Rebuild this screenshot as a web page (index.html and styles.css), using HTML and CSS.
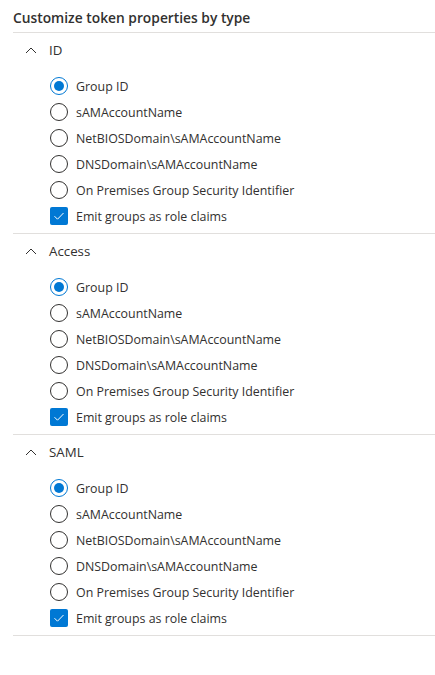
FILE: index.html
```html
<!DOCTYPE html>
<html>
<head>
<meta charset="utf-8">
<link rel="stylesheet" href="styles.css">
</head>
<body>
<div class="panel">
  <div class="title">Customize token properties by type</div>

  <div class="section">
    <div class="section-header">
      <svg class="chev" width="12" height="8" viewBox="0 0 12 8"><path d="M1 7 L6 2 L11 7" fill="none" stroke="#323130" stroke-width="1"/></svg>
      <span>ID</span>
    </div>
    <div class="list">
      <div class="row"><span class="radio checked"></span><span>Group ID</span></div>
      <div class="row"><span class="radio"></span><span>sAMAccountName</span></div>
      <div class="row"><span class="radio"></span><span>NetBIOSDomain\sAMAccountName</span></div>
      <div class="row"><span class="radio"></span><span>DNSDomain\sAMAccountName</span></div>
      <div class="row"><span class="radio"></span><span>On Premises Group Security Identifier</span></div>
      <div class="row"><span class="check"><svg width="12" height="10" viewBox="0 0 12 10"><path d="M1.5 5.2 L4.5 8.2 L10.5 2" fill="none" stroke="#fff" stroke-width="1"/></svg></span><span>Emit groups as role claims</span></div>
    </div>
  </div>

  <div class="section">
    <div class="section-header">
      <svg class="chev" width="12" height="8" viewBox="0 0 12 8"><path d="M1 7 L6 2 L11 7" fill="none" stroke="#323130" stroke-width="1"/></svg>
      <span>Access</span>
    </div>
    <div class="list">
      <div class="row"><span class="radio checked"></span><span>Group ID</span></div>
      <div class="row"><span class="radio"></span><span>sAMAccountName</span></div>
      <div class="row"><span class="radio"></span><span>NetBIOSDomain\sAMAccountName</span></div>
      <div class="row"><span class="radio"></span><span>DNSDomain\sAMAccountName</span></div>
      <div class="row"><span class="radio"></span><span>On Premises Group Security Identifier</span></div>
      <div class="row"><span class="check"><svg width="12" height="10" viewBox="0 0 12 10"><path d="M1.5 5.2 L4.5 8.2 L10.5 2" fill="none" stroke="#fff" stroke-width="1"/></svg></span><span>Emit groups as role claims</span></div>
    </div>
  </div>

  <div class="section">
    <div class="section-header">
      <svg class="chev" width="12" height="8" viewBox="0 0 12 8"><path d="M1 7 L6 2 L11 7" fill="none" stroke="#323130" stroke-width="1"/></svg>
      <span>SAML</span>
    </div>
    <div class="list">
      <div class="row"><span class="radio checked"></span><span>Group ID</span></div>
      <div class="row"><span class="radio"></span><span>sAMAccountName</span></div>
      <div class="row"><span class="radio"></span><span>NetBIOSDomain\sAMAccountName</span></div>
      <div class="row"><span class="radio"></span><span>DNSDomain\sAMAccountName</span></div>
      <div class="row"><span class="radio"></span><span>On Premises Group Security Identifier</span></div>
      <div class="row"><span class="check"><svg width="12" height="10" viewBox="0 0 12 10"><path d="M1.5 5.2 L4.5 8.2 L10.5 2" fill="none" stroke="#fff" stroke-width="1"/></svg></span><span>Emit groups as role claims</span></div>
    </div>
  </div>
</div>
</body>
</html>
```
FILE: styles.css
```css
html, body {
  margin: 0;
  padding: 0;
  background: #ffffff;
}
body {
  font-family: "Open Sans", "Noto Sans", sans-serif;
  color: #323130;
}
.panel {
  padding-left: 13px;
}
.title {
  font-size: 13.8px;
  font-weight: 600;
  line-height: 20px;
  padding-top: 8px;
  padding-bottom: 4px;
  border-bottom: 1px solid #e1dfdd;
}
.section {
  border-bottom: 1px solid #e1dfdd;
  padding-bottom: 4px;
}
.section-header {
  height: 34px;
  display: flex;
  align-items: center;
  padding-left: 12px;
  font-size: 13.3px;
  gap: 12px;
}
.chev {
  display: block;
}
.list {
  margin-top: 6px;
  padding-left: 37px;
  display: flex;
  flex-direction: column;
}
.row {
  height: 26px;
  display: flex;
  align-items: center;
  gap: 8px;
  font-size: 12.4px;
}
.radio {
  width: 18px;
  height: 18px;
  box-sizing: border-box;
  border: 1px solid #323130;
  border-radius: 50%;
  display: flex;
  align-items: center;
  justify-content: center;
  flex: none;
}
.radio.checked {
  border-color: #0078d4;
}
.radio.checked::after {
  content: "";
  width: 10px;
  height: 10px;
  border-radius: 50%;
  background: #0078d4;
}
.check {
  width: 18px;
  height: 18px;
  border-radius: 2px;
  background: #0078d4;
  display: flex;
  align-items: center;
  justify-content: center;
  flex: none;
}
.check svg {
  display: block;
}
```
